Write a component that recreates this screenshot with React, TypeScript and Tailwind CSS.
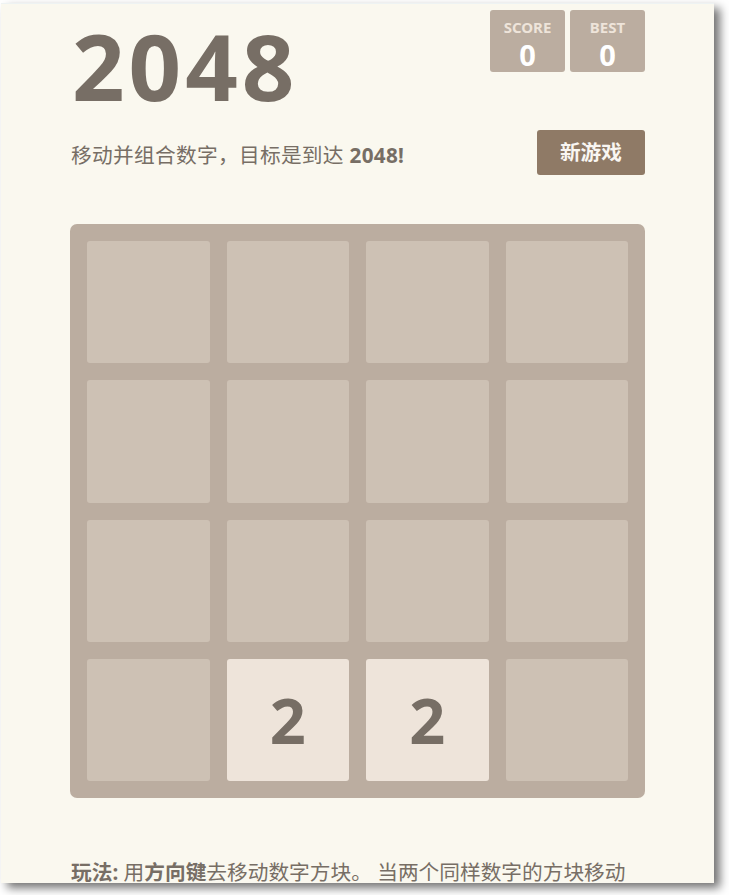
import React from "react";

const font = { fontFamily: '"Noto Sans", "Noto Sans CJK SC", sans-serif' };

const board = [
  [0, 0, 0, 0],
  [0, 0, 0, 0],
  [0, 0, 0, 0],
  [0, 2, 2, 0],
];

function ScoreBox({ label, value }: { label: string; value: number }) {
  return (
    <div className="w-[75px] h-[62px] rounded-[3px] bg-[#bbada0] flex flex-col items-center pt-[10px]">
      <div className="text-[15px] leading-none font-bold uppercase text-[#eee4da]">{label}</div>
      <div className="mt-[5px] text-[29px] leading-none font-bold text-white">{value}</div>
    </div>
  );
}

export default function App() {
  return (
    <div className="w-[729px] h-[895px] bg-white overflow-hidden" style={font}>
      <div className="ml-[1px] mt-[3px] w-[713px] h-[880px] bg-[#faf8ef] border-t border-[#eef3f3] overflow-hidden shadow-[6px_5px_9px_rgba(0,0,0,0.55)] text-[#776e65]">
        <div className="w-[575px] mx-auto">
          <div className="flex justify-between items-start">
            <h1 className="mt-[16px] ml-[2px] text-[92px] leading-none font-bold tracking-[4px]">2048</h1>
            <div className="mt-[6px] flex gap-[5px]">
              <ScoreBox label="Score" value={0} />
              <ScoreBox label="Best" value={0} />
            </div>
          </div>

          <div className="mt-[18px] flex items-center justify-between">
            <p className="text-[20.7px] leading-none pt-[5px] ml-[1px] tracking-[0.3px]">
              移动并组合数字，目标是到达 <strong className="font-bold">2048!</strong>
            </p>
            <button className="h-[45px] px-[23px] rounded-[3px] bg-[#8f7a66] text-[#f9f6f2] text-[20.7px] font-bold">
              新游戏
            </button>
          </div>

          <div className="mt-[49px] h-[574px] rounded-[7px] bg-[#bbada0] p-[17px] grid grid-cols-4 grid-rows-4 gap-[17px]">
            {board.flat().map((v, i) =>
              v ? (
                <div
                  key={i}
                  className="rounded-[3px] bg-[#eee4da] flex items-center justify-center text-[63px] font-bold text-[#776e65]"
                >
                  {v}
                </div>
              ) : (
                <div key={i} className="rounded-[3px] bg-[#cdc1b4]" />
              )
            )}
          </div>

          <p className="mt-[57px] ml-[1px] text-[20.7px] leading-[1.65]">
            <strong className="font-bold">玩法:</strong> 用<strong className="font-bold">方向键</strong>去移动数字方块。 当两个同样数字的方块移动
            <br />
            到一起时，它们会<strong className="font-bold">合并为一</strong>！
          </p>
        </div>
      </div>
    </div>
  );
}
